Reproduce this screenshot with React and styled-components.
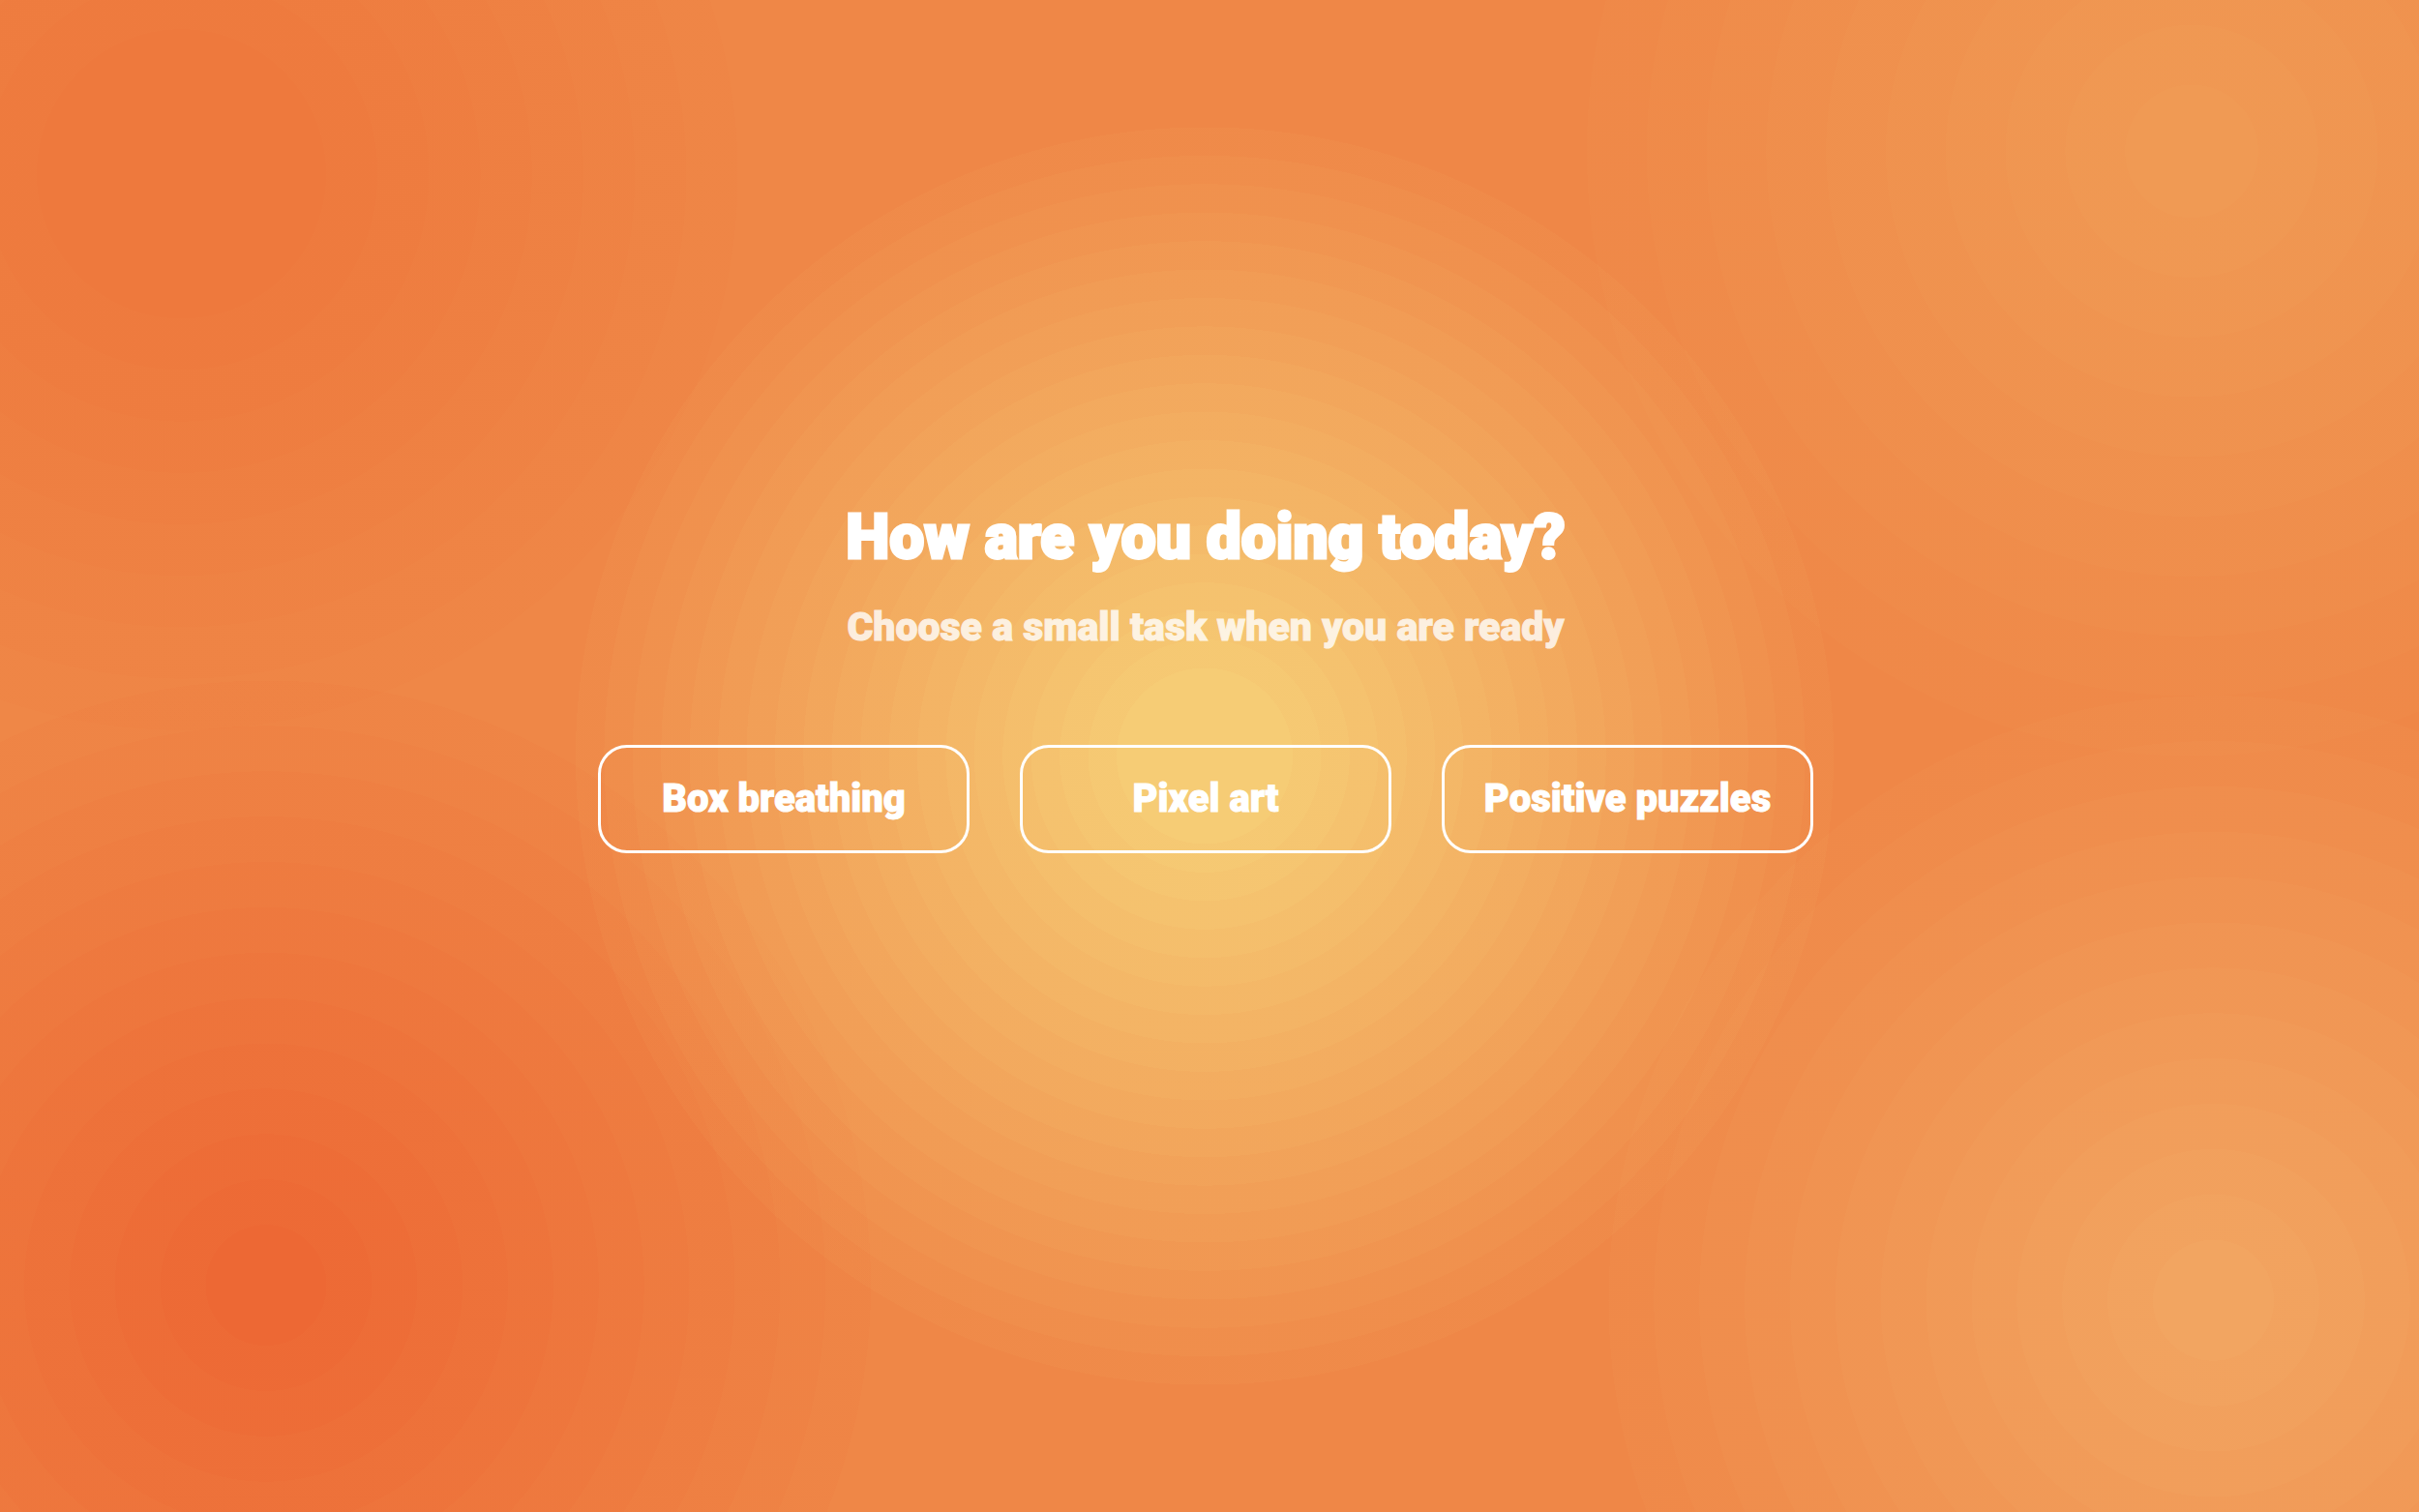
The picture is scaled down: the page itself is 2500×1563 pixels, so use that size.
import React from 'react';
import styled, { createGlobalStyle } from 'styled-components';

const GlobalStyle = createGlobalStyle`
  *, *::before, *::after { box-sizing: border-box; }
  body { margin: 0; background: #ef8747; }
`;

// A soft light made of concentric steps that fade out towards the rim.
// `core` is the share of the radius that keeps the full colour.
const glow = ({ x, y, radius, color, steps, core }) => {
  const stops = [`rgba(${color}, 1) 0% ${core}%`];
  const band = (100 - core) / steps;
  for (let i = 0; i < steps; i += 1) {
    const alpha = (1 - (i + 1) / (steps + 1)).toFixed(3);
    const from = (core + i * band).toFixed(2);
    const to = (core + (i + 1) * band).toFixed(2);
    stops.push(`rgba(${color}, ${alpha}) ${from}% ${to}%`);
  }
  return `radial-gradient(circle ${radius} at ${x} ${y}, ${stops.join(', ')}, rgba(${color}, 0) 100%)`;
};

const lights = [
  glow({ x: '49.8%', y: '50%', radius: '26vw', color: '246, 204, 117', steps: 19, core: 14 }),
  glow({ x: '11%', y: '85%', radius: '25vw', color: '237, 104, 52', steps: 12, core: 10 }),
  glow({ x: '7.5%', y: '11.5%', radius: '23vw', color: '238, 121, 61', steps: 8, core: 26 }),
  glow({ x: '90.6%', y: '10%', radius: '25vw', color: '240, 154, 84', steps: 9, core: 11 }),
  glow({ x: '91.5%', y: '86%', radius: '25vw', color: '242, 165, 97', steps: 12, core: 10 }),
].join(', ');

const Page = styled.main`
  min-height: 100vh;
  padding: 0 8px 160px 0;
  display: flex;
  flex-direction: column;
  align-items: center;
  justify-content: center;
  background: ${lights}, #ef8747;
  color: #ffffff;
  font-family: Roboto, "Open Sans", sans-serif;
  font-weight: 900;
  text-align: center;
  -webkit-text-stroke: 1px currentColor;
`;

const Title = styled.h1`
  margin: 0;
  font-size: 64px;
  line-height: 68px;
  font-weight: 900;
  -webkit-text-stroke-width: 3px;
`;

const Subtitle = styled.p`
  margin: 34px 0 0;
  font-size: 41px;
  line-height: 48px;
  opacity: 0.8;
`;

const Tasks = styled.nav`
  margin-top: 98px;
  display: flex;
  flex-wrap: wrap;
  justify-content: center;
  gap: 52px;
`;

const TaskButton = styled.button`
  width: 384px;
  height: 112px;
  padding: 0;
  border: 3px solid #ffffff;
  border-radius: 30px;
  background: transparent;
  color: inherit;
  font: inherit;
  font-size: 40px;
  line-height: 48px;
  -webkit-text-stroke: inherit;
  cursor: pointer;
`;

const tasks = ['Box breathing', 'Pixel art', 'Positive puzzles'];

export default function App() {
  return (
    <>
      <GlobalStyle />
      <Page>
        <Title>How are you doing today?</Title>
        <Subtitle>Choose a small task when you are ready</Subtitle>
        <Tasks aria-label="Tasks">
          {tasks.map((task) => (
            <TaskButton key={task} type="button">{task}</TaskButton>
          ))}
        </Tasks>
      </Page>
    </>
  );
}
